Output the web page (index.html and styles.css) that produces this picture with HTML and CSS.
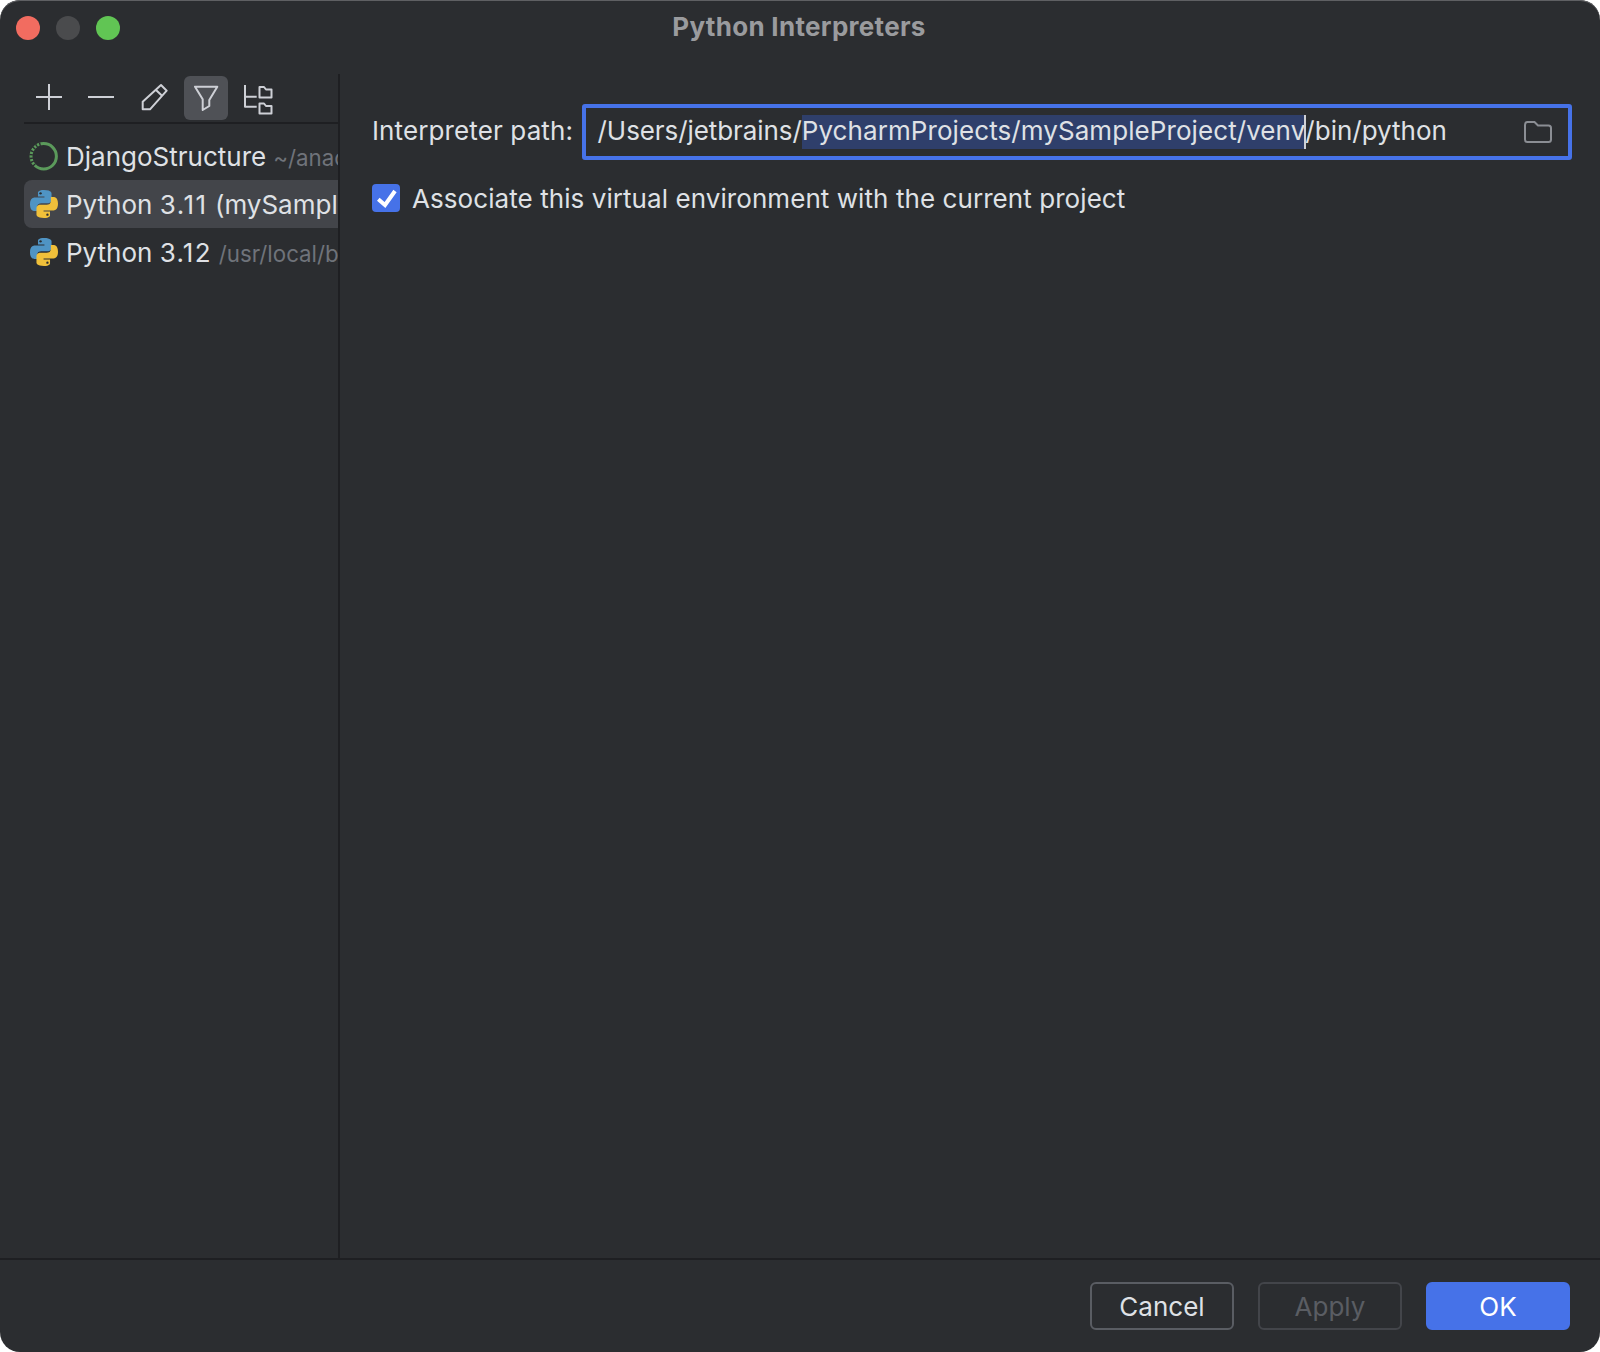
FILE: index.html
```html
<!DOCTYPE html>
<html lang="en">
<head>
<meta charset="utf-8">
<title>Python Interpreters</title>
<link rel="stylesheet" href="styles.css">
</head>
<body>
<svg class="defs" width="0" height="0" aria-hidden="true">
  <defs>
    <path id="snake" d="M14 1C7.900 1 8.400 3.700 8.400 3.700V7H14.400V8H5.600C5.600 8 1 7.500 1 14.200C1 20.800 5 20.400 5 20.400H7.600V17.200C7.600 17.200 7.400 13.400 11.400 13.400H17.500C17.500 13.400 21 13.500 21 9.900V4.400C21 4.400 21.600 1 14 1Z"/>
    <symbol id="python" viewBox="1 1 26 26">
      <use href="#snake" fill="#4f94c4"/>
      <use href="#snake" fill="#f0c03a" transform="rotate(180 14 14)"/>
      <circle cx="10.800" cy="4.100" r="1.100" fill="#2b2d30"/>
      <circle cx="17.200" cy="23.900" r="1.100" fill="#2b2d30"/>
    </symbol>
  </defs>
</svg>
<div class="window">
  <header class="titlebar">
    <div class="lights">
      <span class="light red"></span>
      <span class="light gray"></span>
      <span class="light green"></span>
    </div>
    <div class="title">Python Interpreters</div>
    <div></div>
  </header>
  <main class="main">
    <aside class="side">
      <div class="toolbar">
        <span class="tool"><svg class="ico" viewBox="0 0 32 32"><path d="M2 15H28M15 2V28"/></svg></span>
        <span class="tool"><svg class="ico" viewBox="0 0 32 32"><path d="M2 15H28"/></svg></span>
        <span class="tool"><svg class="ico" viewBox="0 0 32 32"><path d="M4.700 27.300V19.700L23 3L28.700 8.700L12 27.300ZM18 8L24.300 14"/></svg></span>
        <span class="tool active"><svg class="ico" viewBox="0 0 32 32"><path d="M5 4.700H27.300L19.300 18V24L12.700 28V17.300Z"/></svg></span>
        <span class="tool"><svg class="ico" viewBox="0 0 32 32"><path d="M3 3V24.700H14.700M3 14.700H14.700"/><path d="M17.500 5H22L24 7.500H29.500V15.500H17.500ZM17.500 21.500H22L24 24H29.500V31.500H17.500Z"/></svg></span>
      </div>
      <ul class="list">
        <li class="row">
          <svg class="row-ico" viewBox="0 0 28 28">
            <circle class="ring" cx="13.700" cy="14.300" r="12.700"/>
            <circle class="ring-dots" cx="13.700" cy="14.300" r="12.700"/>
          </svg>
          <span class="name">DjangoStructure</span><span class="path">~/anaco</span>
        </li>
        <li class="row selected">
          <svg class="row-ico"><use href="#python"/></svg>
          <span class="name">Python <span class="ver-wide">3.11</span> (mySample</span>
        </li>
        <li class="row">
          <svg class="row-ico"><use href="#python"/></svg>
          <span class="name">Python <span class="ver">3.12</span></span><span class="path">/usr/local/bin</span>
        </li>
      </ul>
    </aside>
    <section class="pane">
      <div class="path-row">
        <span class="label path-label">Interpreter path:</span>
        <div class="input">
          <span class="value"><span class="pre">/Users/jetbrains/</span><span class="sel">PycharmProjects/mySampleProject/venv</span><span class="caret"></span><span>/bin/python</span></span>
          <svg class="folder" viewBox="0 0 28 22"><path d="M1 4C1 2 2 1 3.500 1H10.500L14 4.500H24.500C26 4.500 27 5.500 27 7V18.500C27 20 26 21 24.500 21H3.500C2 21 1 20 1 18.500Z"/></svg>
        </div>
      </div>
      <label class="check-row">
        <span class="check"><svg viewBox="0 0 28 28"><path d="M6.300 15.300L13 21L23 7"/></svg></span>
        <span class="label check-label">Associate this virtual environment with the current project</span>
      </label>
    </section>
  </main>
  <footer class="foot">
    <button class="btn">Cancel</button>
    <button class="btn disabled">Apply</button>
    <button class="btn primary">OK</button>
  </footer>
</div>
</body>
</html>
```
FILE: styles.css
```css
* { box-sizing: border-box; }
html, body { margin: 0; padding: 0; background: #ffffff; }
body { font-family: Inter, "Liberation Sans", sans-serif; font-size: 26px; color: #dfe1e5; }
.defs { position: absolute; }
.window {
  width: 1600px; height: 1352px;
  display: flex; flex-direction: column;
  background: #2b2d30;
  border-radius: 20px;
  overflow: hidden;
  box-shadow: inset 0 1px 0 #5f6063;
}
.titlebar {
  height: 72px; flex: none;
  display: grid; grid-template-columns: 1fr auto 1fr;
  padding-top: 16px;
}
.lights { display: flex; gap: 16px; padding-left: 16px; }
.light { width: 24px; height: 24px; border-radius: 50%; }
.light.red { background: #f26c60; }
.light.gray { background: #4a4b4d; }
.light.green { background: #61c554; }
.title { font-weight: 700; color: #9a9b9e; font-size: 26px; letter-spacing: 0.3px; line-height: 22px; padding-right: 2px; }
.main { flex: 1; display: flex; min-height: 0; }
.side {
  width: 340px; flex: none;
  margin-top: 2px;
  padding-left: 24px;
  border-right: 2px solid #1e1f22;
  overflow: hidden;
}
.toolbar {
  display: flex; gap: 8px;
  padding: 2px 0 2px 4px;
  border-bottom: 2px solid #1e1f22;
}
.tool { width: 44px; height: 44px; border-radius: 6px; display: flex; align-items: center; justify-content: center; }
.tool.active { background: #4f5156; }
.ico { width: 32px; height: 32px; fill: none; stroke: #ced0d6; stroke-width: 2; stroke-linejoin: round; overflow: visible; }
.list { list-style: none; margin: 8px 0 0; padding: 0; }
.row {
  height: 48px;
  display: flex; align-items: center;
  padding-left: 6px;
  white-space: nowrap;
  overflow: hidden;
  border-radius: 8px 0 0 8px;
}
.row.selected { background: #43454a; }
.row-ico { width: 28px; height: 28px; flex: none; margin-right: 8px; overflow: visible; }
.ring { fill: none; stroke: #5b9a5b; stroke-width: 3; }
.ring-dots {
  fill: none; stroke: #2b2d30; stroke-width: 3.600;
  stroke-dasharray: 1.400 2.200 1.400 2.200 1.400 2.200 1.400 2.200 1.400 2.200 1.400 2.200 1.400 2.200 1.400 2.200 0 100;
  transform: rotate(135deg); transform-origin: 13.700px 14.300px;
}
.name { color: #dfe1e5; }
.ver { letter-spacing: 1.200px; }
.ver-wide { letter-spacing: 1.500px; }
.path { color: #6f737a; font-size: 22.300px; margin-left: 7px; padding-top: 3px; }
.pane { flex: 1; padding: 32px 28px 0 32px; }
.path-row { display: flex; align-items: center; gap: 9px; }
.label { white-space: nowrap; }
.path-label { letter-spacing: 0.12px; padding-bottom: 3px; }
.check-label { letter-spacing: 0.07px; line-height: 28px; padding-top: 2px; }
.input {
  flex: 1; height: 56px;
  display: flex; align-items: center; justify-content: space-between;
  padding: 0 16px 0 11.500px;
  border: 4px solid #4672e8;
  border-radius: 3px;
}
.value { white-space: nowrap; line-height: 32px; display: flex; }
.pre { letter-spacing: -0.08px; }
.sel { background: #2f3f6b; display: block; height: 34px; letter-spacing: 0.08px; }
.caret { width: 2px; height: 34px; background: #ced0d6; display: block; margin-left: -1px; margin-right: -1px; }
.folder { width: 28px; height: 22px; fill: none; stroke: #8b8e94; stroke-width: 2; }
.check-row { display: flex; height: 28px; align-items: center; gap: 12px; margin-top: 24px; }
.check { width: 28px; height: 28px; background: #4672e8; border-radius: 4px; flex: none; }
.check svg { display: block; width: 28px; height: 28px; fill: none; stroke: #ffffff; stroke-width: 4; }
.foot {
  height: 94px; flex: none;
  border-top: 2px solid #1e1f22;
  display: flex; justify-content: flex-end; gap: 24px;
  padding: 22px 30px 0 0;
}
.btn {
  width: 144px; height: 48px;
  font: inherit; color: #dfe1e5;
  background: transparent;
  border: 2px solid #5a5d63;
  border-radius: 6px;
  padding: 0;
}
.btn.disabled { color: #5a5d63; border-color: #43454a; }
.btn.primary { background: #4672e8; border-color: #4672e8; color: #ffffff; }
```
